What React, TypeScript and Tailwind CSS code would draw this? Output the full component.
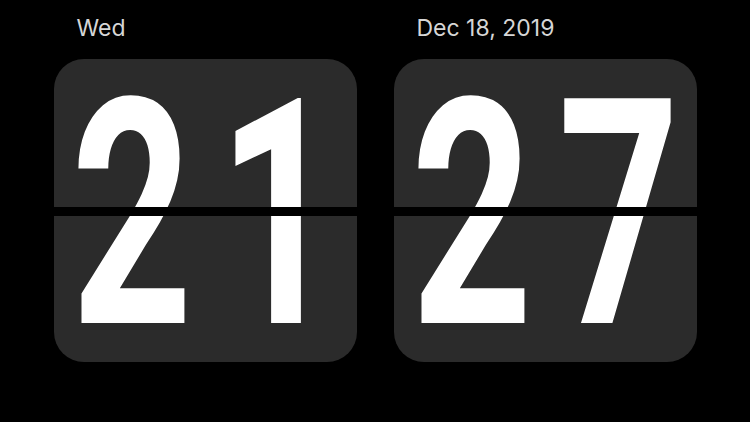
import React from 'react';

function FlipCard({ label, value }: { label: string; value: string }) {
  return (
    <div className="flex flex-col">
      <div className="h-[59px] pl-[23px] pt-[17px] text-[23px] leading-none text-[#d6d6d6] font-['Inter',sans-serif]">
        {label}
      </div>
      <div className="relative w-[303px] h-[303px] rounded-[30px] bg-[#2b2b2b] overflow-hidden flex items-center justify-center">
        <span className="block pl-[38px] text-white font-['Roboto',sans-serif] font-bold text-[316px] leading-none tracking-[38px] scale-x-[0.67] translate-y-[4px] tabular-nums">
          {value}
        </span>
        {/* split between the two flaps */}
        <div className="absolute left-0 right-0 top-[148px] h-[9px] bg-black" />
      </div>
    </div>
  );
}

export default function App() {
  return (
    <div className="w-[750px] h-[422px] bg-black flex justify-center gap-[37px] overflow-hidden">
      <FlipCard label="Wed" value="21" />
      <FlipCard label="Dec 18, 2019" value="27" />
    </div>
  );
}
